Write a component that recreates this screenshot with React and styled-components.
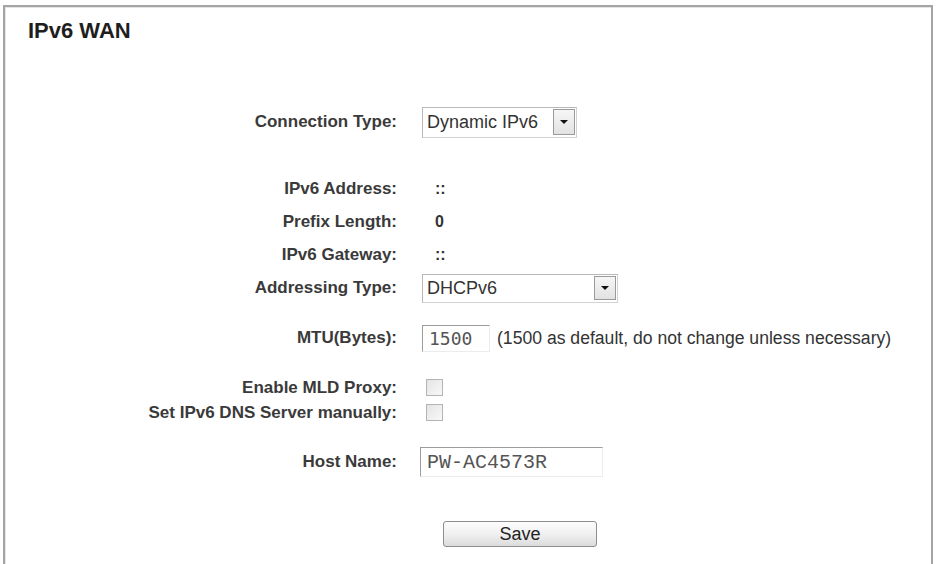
import React from "react";
import styled, { createGlobalStyle } from "styled-components";

const Global = createGlobalStyle`
  html, body { margin: 0; padding: 0; background: #fff; overflow: hidden; }
  body { font-family: "Liberation Sans", Arial, sans-serif; color: #333; }
`;

const Panel = styled.div`
  margin: 5px 4px 0 3px;
  height: 580px;
  border: 2px solid #a4a4a4;
  border-bottom: none;
  box-shadow: inset 1px 1px 0 #e4e4e4;
  box-sizing: border-box;
`;

const Title = styled.h1`
  margin: 13px 0 0 23px;
  font-size: 22px;
  line-height: 22px;
  font-weight: bold;
  color: #1e1e1e;
`;

const Row = styled.div`
  display: grid;
  grid-template-columns: 392px 1fr;
  column-gap: 25px;
  align-items: center;
  height: ${(p) => p.$h}px;
  margin-top: ${(p) => p.$mt}px;
`;

const Label = styled.div`
  text-align: right;
  font-size: 17px;
  font-weight: bold;
  color: #3a3a3a;
  white-space: nowrap;
`;

const Field = styled.div`
  display: flex;
  align-items: center;
  height: 100%;
`;

const Value = styled.span`
  padding-left: 13px;
  font-size: 16px;
  font-weight: bold;
  color: #333;
`;

const Select = styled.div`
  display: flex;
  align-items: center;
  justify-content: space-between;
  box-sizing: border-box;
  width: ${(p) => p.$w}px;
  height: ${(p) => p.$ht}px;
  border: 1px solid #d2d2d2;
  border-top-color: #b8b8b8;
  border-left-color: #b8b8b8;
  padding: 0 1px 0 4px;
  background: #fff;
  font-size: 18px;
  color: #333;
`;

const DropButton = styled.span`
  display: flex;
  align-items: center;
  justify-content: center;
  box-sizing: border-box;
  width: 22px;
  height: ${(p) => p.$ht}px;
  border: 1px solid #9a9a9a;
  background: linear-gradient(#f6f6f6, #e2e2e2);
`;

const Arrow = styled.span`
  width: 0;
  height: 0;
  border-left: 4px solid transparent;
  border-right: 4px solid transparent;
  border-top: 4px solid #111;
`;

const TextInput = styled.div`
  box-sizing: border-box;
  width: ${(p) => p.$w}px;
  height: ${(p) => p.$ht}px;
  margin-left: ${(p) => p.$ml || 0}px;
  display: flex;
  align-items: center;
  padding-left: 6px;
  border-top: 1px solid #9c9c9c;
  border-left: 1px solid #9c9c9c;
  border-right: 1px solid #ececec;
  border-bottom: 1px solid #ececec;
  font-family: ${(p) => (p.$serifMono ? '"Liberation Mono", "Courier New", monospace' : '"DejaVu Sans Mono", monospace')};
  font-size: ${(p) => p.$fs}px;
  color: #555;
`;

const Hint = styled.span`
  margin-left: 7px;
  font-size: 17.6px;
  color: #333;
  white-space: nowrap;
`;

const Check = styled.span`
  display: inline-block;
  box-sizing: border-box;
  width: 17px;
  height: 17px;
  margin-left: 4px;
  border: 1px solid #b4b4b4;
  background: linear-gradient(135deg, #e4e4e4, #f8f8f8);
`;

const SaveButton = styled.button`
  margin-left: 21px;
  width: 154px;
  height: 26px;
  border: 1px solid #8e8e8e;
  border-radius: 3px;
  background: linear-gradient(#fdfdfd, #f0f0f0 50%, #dcdcdc);
  font-family: "Liberation Sans", Arial, sans-serif;
  font-size: 18px;
  color: #222;
  padding: 0;
`;

const Dropdown = ({ text, w, h }) => (
  <Select $w={w} $ht={h}>
    <span>{text}</span>
    <DropButton $ht={h - 5}>
      <Arrow />
    </DropButton>
  </Select>
);

export default function App() {
  return (
    <>
      <Global />
      <Panel>
        <Title>IPv6 WAN</Title>

        <Row $h={32} $mt={64}>
          <Label>Connection Type:</Label>
          <Field>
            <Dropdown text="Dynamic IPv6" w={155} h={31} />
          </Field>
        </Row>

        <Row $h={33} $mt={34}>
          <Label>IPv6 Address:</Label>
          <Value>::</Value>
        </Row>
        <Row $h={33} $mt={0}>
          <Label>Prefix Length:</Label>
          <Value>0</Value>
        </Row>
        <Row $h={33} $mt={0}>
          <Label>IPv6 Gateway:</Label>
          <Value>::</Value>
        </Row>

        <Row $h={34} $mt={0}>
          <Label>Addressing Type:</Label>
          <Field>
            <Dropdown text="DHCPv6" w={196} h={29} />
          </Field>
        </Row>

        <Row $h={30} $mt={18}>
          <Label>MTU(Bytes):</Label>
          <Field>
            <TextInput $w={68} $ht={27} $fs={18}>1500</TextInput>
            <Hint>(1500 as default, do not change unless necessary)</Hint>
          </Field>
        </Row>

        <Row $h={25} $mt={22}>
          <Label>Enable MLD Proxy:</Label>
          <Field>
            <Check />
          </Field>
        </Row>
        <Row $h={25} $mt={0}>
          <Label>Set IPv6 DNS Server manually:</Label>
          <Field>
            <Check />
          </Field>
        </Row>

        <Row $h={30} $mt={22}>
          <Label>Host Name:</Label>
          <Field>
            <TextInput $w={183} $ht={30} $fs={20} $ml={-2} $serifMono>
              PW-AC4573R
            </TextInput>
          </Field>
        </Row>

        <Row $h={26} $mt={44}>
          <span />
          <Field>
            <SaveButton>Save</SaveButton>
          </Field>
        </Row>
      </Panel>
    </>
  );
}
